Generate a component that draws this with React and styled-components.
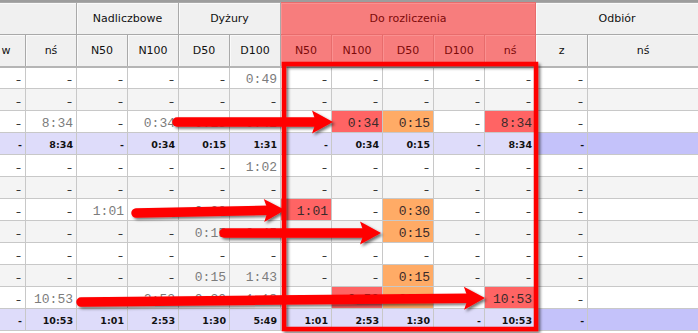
import styled, { createGlobalStyle } from 'styled-components'

const GlobalStyle = createGlobalStyle`
    html, body {
        margin: 0;
        padding: 0;
        background: #fff;
    }
`

const Screen = styled.div`
    position: relative;
    width: 698px;
    height: 333px;
    overflow: hidden;
    background: #fff;
`

const TopBar = styled.div`
    height: 2px;
    background: #9d9d9d;
`

const Grid = styled.table`
    margin-left: -14px;
    width: 712px;
    table-layout: fixed;
    border-collapse: collapse;
`

const Head = styled.th`
    height: 32px;
    box-sizing: border-box;
    padding: 0;
    font-family: "DejaVu Sans", sans-serif;
    font-size: 11px;
    font-weight: normal;
    text-align: center;
    white-space: nowrap;
    color: ${ p => p.$pink ? `#7d0a0a` : `#111` };
    background: ${ p => p.$pink ? `#f77d7d` : `#f0f0f0` };
    border: 1px solid ${ p => p.$pink ? `#e86c6c` : `#a9a9a9` };
    box-shadow: inset 1px 1px 0 ${ p => p.$pink ? `#fa9090` : `#fafafa` };
`

const HeadRow = styled.tr`
    &:last-child th {
        border-bottom: 2px solid #b5b5b5;
    }
`

const Row = styled.tr`
    background: ${ p => p.$sum ? `#dedcfa` : p.$alt ? `#f4f4f4` : `#fff` };
`

const tones = {
    red: `#ff6464`,
    orange: `#ffab66`,
    odb: `#c4c2fa`,
}

const Cell = styled.td`
    height: 22px;
    box-sizing: border-box;
    padding: ${ p => p.$sum ? `2px 3px 0 0` : `4px 3px 0 0` };
    border: 1px solid #c8c8c8;
    text-align: right;
    white-space: nowrap;
    overflow: hidden;
    line-height: 16px;
    background: ${ p => tones[p.$tone] || `transparent` };
    font-family: ${ p => p.$sum ? `"DejaVu Sans", sans-serif` : `"Liberation Mono", monospace` };
    font-size: ${ p => p.$sum ? `9.5px` : `13px` };
    font-weight: ${ p => p.$sum ? `bold` : `normal` };
    color: ${ p => p.$sum ? `#111` : p.$dark ? `#3a2a2a` : `#7c7c7c` };
`

const Dash = styled.span`
    font-family: "DejaVu Sans", sans-serif;
    font-size: 10px;
    color: #000;
    padding-right: 1px;
`

const Overlay = styled.svg`
    position: absolute;
    left: 0;
    top: 0;
    pointer-events: none;
`

// w, nś, N50, N100, D50, D100 | N50, N100, D50, D100, nś | z, nś
const D = null
const rows = [
    { v: [ D, D, D, D, D, `0:49`, D, D, D, D, D, D, `` ] },
    { v: [ D, D, D, D, D, D, D, D, D, D, D, D, `` ], alt: true },
    { v: [ D, `8:34`, D, `0:34`, `0:15`, `0:42`, D, `0:34`, `0:15`, D, `8:34`, D, `` ],
        tone: { 7: `red`, 8: `orange`, 10: `red` } },
    { v: [ `-`, `8:34`, `-`, `0:34`, `0:15`, `1:31`, `-`, `0:34`, `0:15`, `-`, `8:34`, `-`, `` ], sum: true },
    { v: [ D, D, D, D, D, `1:02`, D, D, D, D, D, D, `` ] },
    { v: [ D, D, D, D, D, D, D, D, D, D, D, D, `` ], alt: true },
    { v: [ D, D, `1:01`, D, `0:30`, `1:01`, `1:01`, D, `0:30`, D, D, D, `` ],
        tone: { 6: `red`, 8: `orange` } },
    { v: [ D, D, D, D, `0:15`, `0:45`, D, D, `0:15`, D, D, D, `` ], alt: true,
        tone: { 8: `orange` } },
    { v: [ D, D, D, D, D, D, D, D, D, D, D, D, `` ] },
    { v: [ D, D, D, D, `0:15`, `1:43`, D, D, `0:15`, D, D, D, `` ], alt: true,
        tone: { 8: `orange` } },
    { v: [ D, `10:53`, D, `2:53`, `0:30`, `1:18`, D, `2:53`, `0:30`, D, `10:53`, D, `` ],
        tone: { 7: `red`, 8: `orange`, 10: `red` } },
    { v: [ `-`, `10:53`, `1:01`, `2:53`, `1:30`, `5:49`, `1:01`, `2:53`, `1:30`, `-`, `10:53`, `-`, `` ], sum: true },
]

// first column is scrolled partly out of view
const widths = [ 39, 51, 51, 51, 51, 51, 51, 51, 51, 51, 51, 52, 111 ]

const arrows = [
    [ 177, 122, 333, 122 ],
    [ 136, 213, 285, 210 ],
    [ 224, 233, 381, 233 ],
    [ 81, 302, 485, 298 ],
]

function Arrow( { x1, y1, x2, y2 } ) {
    const a = Math.atan2( y2 - y1, x2 - x1 )
    const c = Math.cos( a )
    const s = Math.sin( a )
    const pt = ( along, across ) => `${ x2 + along * c - across * s },${ y2 + along * s + across * c }`
    return <g>
        <line x1={ x1 } y1={ y1 } x2={ x2 - 16 * c } y2={ y2 - 16 * s }
            stroke="#f00" strokeWidth="9.5" strokeLinecap="round" />
        <polygon points={ `${ pt( 0, 0 ) } ${ pt( -21, -11.5 ) } ${ pt( -17, 0 ) } ${ pt( -21, 11.5 ) }` }
            fill="#f00" />
    </g>
}

export default function App() {
    return <Screen>
        <GlobalStyle />
        <TopBar />
        <Grid>
            <colgroup>
                { widths.map( ( w, i ) => <col key={ i } style={ { width: w } } /> ) }
            </colgroup>
            <thead>
                <HeadRow>
                    <Head colSpan={ 2 } />
                    <Head colSpan={ 2 }>Nadliczbowe</Head>
                    <Head colSpan={ 2 }>Dyżury</Head>
                    <Head colSpan={ 5 } $pink>Do rozliczenia</Head>
                    <Head colSpan={ 2 }>Odbiór</Head>
                </HeadRow>
                <HeadRow>
                    <Head>w</Head>
                    <Head>nś</Head>
                    <Head>N50</Head>
                    <Head>N100</Head>
                    <Head>D50</Head>
                    <Head>D100</Head>
                    <Head $pink>N50</Head>
                    <Head $pink>N100</Head>
                    <Head $pink>D50</Head>
                    <Head $pink>D100</Head>
                    <Head $pink>nś</Head>
                    <Head>z</Head>
                    <Head>nś</Head>
                </HeadRow>
            </thead>
            <tbody>
                { rows.map( ( r, ri ) => <Row key={ ri } $alt={ r.alt } $sum={ r.sum }>
                    { r.v.map( ( v, ci ) => {
                        const tone = r.tone?.[ ci ] || ( r.sum && ci >= 11 ? `odb` : undefined )
                        return <Cell key={ ci } $sum={ r.sum } $tone={ tone } $dark={ ci >= 6 && ci <= 10 }>
                            { v === null ? <Dash>–</Dash> : v }
                        </Cell>
                    } ) }
                </Row> ) }
            </tbody>
        </Grid>
        <Overlay width="698" height="333" viewBox="0 0 698 333">
            <defs>
                <filter id="shade" x="-10%" y="-50%" width="120%" height="200%">
                    <feDropShadow dx="2" dy="2" stdDeviation="1.4" floodColor="#000" floodOpacity="0.55" />
                </filter>
            </defs>
            <g filter="url(#shade)">
                <rect x="284" y="64" width="252" height="265" fill="none" stroke="#f00" strokeWidth="4.5" />
                { arrows.map( ( [ x1, y1, x2, y2 ], i ) => <Arrow key={ i } x1={ x1 } y1={ y1 } x2={ x2 } y2={ y2 } /> ) }
            </g>
        </Overlay>
    </Screen>
}
